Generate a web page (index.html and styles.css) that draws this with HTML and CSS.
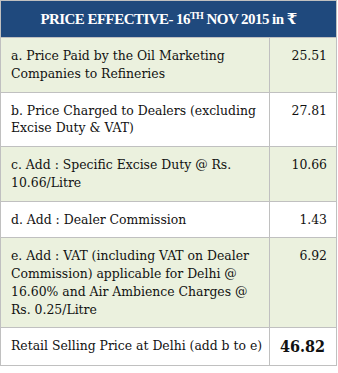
FILE: index.html
```html
<!DOCTYPE html>
<html>
<head>
<meta charset="utf-8">
<link rel="stylesheet" href="styles.css">
</head>
<body>
<table class="price-table">
  <colgroup>
    <col class="col-label">
    <col class="col-value">
  </colgroup>
  <tr>
    <th class="title" colspan="2">PRICE EFFECTIVE- 16<sup>TH</sup> NOV 2015 in ₹</th>
  </tr>
  <tr class="shade">
    <td class="label">a. Price Paid by the Oil Marketing<br>Companies to Refineries</td>
    <td class="value">25.51</td>
  </tr>
  <tr>
    <td class="label">b. Price Charged to Dealers (excluding<br>Excise Duty &amp; VAT)</td>
    <td class="value">27.81</td>
  </tr>
  <tr class="shade">
    <td class="label">c. Add : Specific Excise Duty @ Rs.<br>10.66/Litre</td>
    <td class="value">10.66</td>
  </tr>
  <tr>
    <td class="label">d. Add : Dealer Commission</td>
    <td class="value">1.43</td>
  </tr>
  <tr class="shade">
    <td class="label">e. Add : VAT (including VAT on Dealer<br>Commission) applicable for Delhi @<br>16.60% and Air Ambience Charges @<br>Rs. 0.25/Litre</td>
    <td class="value">6.92</td>
  </tr>
  <tr>
    <td class="label total-label">Retail Selling Price at Delhi (add b to e)</td>
    <td class="value total">46.82</td>
  </tr>
</table>
</body>
</html>
```
FILE: styles.css
```css
html, body {
  margin: 0;
  padding: 0;
  background: #ffffff;
}

.price-table {
  border-collapse: collapse;
  table-layout: fixed;
  width: 336px;
  font-family: "DejaVu Serif Condensed", "DejaVu Serif", serif;
  font-stretch: condensed;
  font-size: 13.8px;
  color: #111111;
}

.col-label {
  width: 269px;
}

.col-value {
  width: 67px;
}

.price-table th,
.price-table td {
  border: 1px solid #c0c0c0;
}

.title {
  background: #1f497d;
  color: #ffffff;
  font-family: "Liberation Serif", "DejaVu Serif", serif;
  font-stretch: normal;
  font-weight: bold;
  font-size: 15px;
  letter-spacing: -0.55px;
  height: 36px;
  padding: 0;
  text-align: center;
  vertical-align: middle;
}

.title sup {
  font-size: 10px;
  vertical-align: 5px;
  line-height: 0;
}

.shade td {
  background: #ebf1de;
}

.label {
  padding: 9px 2px 9px 10px;
  line-height: 17.75px;
  text-align: left;
  vertical-align: top;
  white-space: nowrap;
  overflow: hidden;
}

.value {
  padding: 9px 9px 9px 2px;
  line-height: 17.75px;
  text-align: right;
  vertical-align: top;
}

.total-label {
  padding-top: 9px;
  padding-bottom: 10px;
}

.total {
  font-weight: bold;
  font-size: 16px;
  padding-top: 10px;
  padding-right: 11px;
  vertical-align: top;
}
```
